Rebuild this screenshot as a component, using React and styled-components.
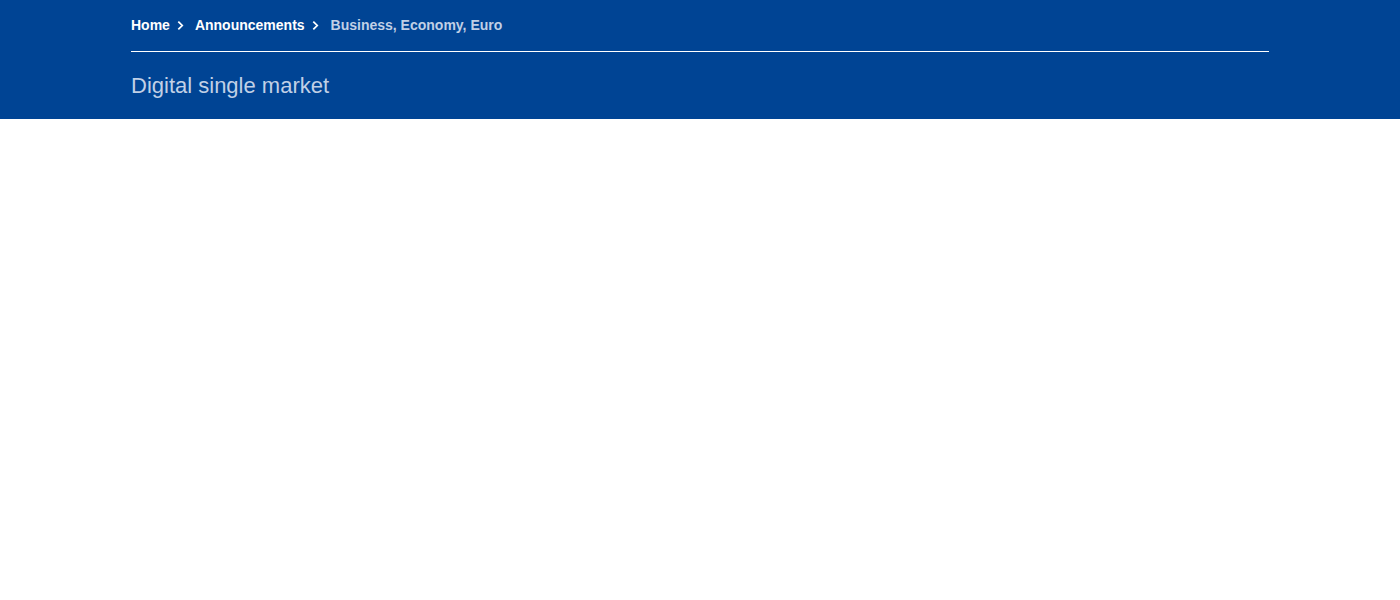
import React from "react";
import styled, { createGlobalStyle } from "styled-components";

const GlobalStyle = createGlobalStyle`
  body {
    margin: 0;
    background: #fff;
    font-family: Arial, "Liberation Sans", Helvetica, sans-serif;
  }
`;

const crumbs = [
  { label: "Home", href: "#" },
  { label: "Announcements", href: "#" },
  { label: "Business, Economy, Euro" },
];

const Chevron = () => (
  <ChevronIcon viewBox="0 0 8 12" aria-hidden="true">
    <path d="M1.5 1.5 L6 6 L1.5 10.5" fill="none" stroke="#fff" strokeWidth="2" />
  </ChevronIcon>
);

const App = () => (
  <>
    <GlobalStyle />
    <PageHeader>
      <Container>
        <Breadcrumb>
          {crumbs.map((crumb, i) => (
            <Crumb key={i}>
              {crumb.href ? <CrumbLink href={crumb.href}>{crumb.label}</CrumbLink> : <Current>{crumb.label}</Current>}
              {i < crumbs.length - 1 && <Chevron />}
            </Crumb>
          ))}
        </Breadcrumb>
        <Title>Digital single market</Title>
      </Container>
    </PageHeader>
  </>
);

const PageHeader = styled.header`
  background: #004494;
  padding-bottom: 20px;
`;

const Container = styled.div`
  width: 1138px;
  margin: 0 0 0 131px;
`;

const Breadcrumb = styled.nav`
  display: flex;
  align-items: center;
  padding: 16px 0 17px;
  border-bottom: 1px solid #fff;
`;

const Crumb = styled.span`
  display: flex;
  align-items: center;
  font-size: 14px;
  line-height: 18px;
  font-weight: 700;
`;

const CrumbLink = styled.a`
  color: #fff;
  text-decoration: none;
`;

const Current = styled.span`
  color: #c1d0e6;
  margin-left: 1px;
`;

const ChevronIcon = styled.svg`
  width: 7px;
  height: 11px;
  margin: 0 11px 0 7px;
`;

const Title = styled.h1`
  margin: 21px 0 0;
  font-size: 22px;
  line-height: 26px;
  font-weight: 400;
  color: #c1d0e6;
`;

export default App;
